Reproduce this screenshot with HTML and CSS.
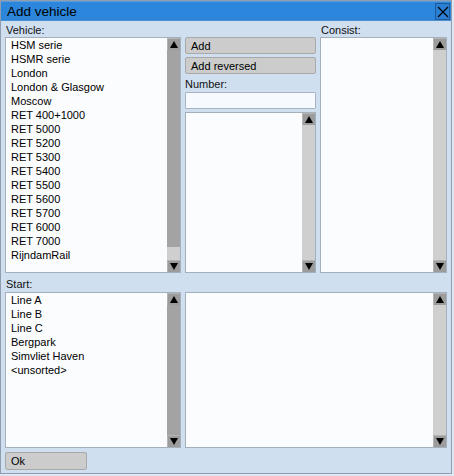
FILE: index.html
```html
<!DOCTYPE html>
<html>
<head>
<meta charset="utf-8">
<link rel="stylesheet" href="styles.css">
</head>
<body>
<div class="window">
  <div class="titlebar">
    <span class="title">Add vehicle</span>
    <span class="close"><svg width="12" height="12" viewBox="0 0 12 12"><path d="M1 1L11 11M11 1L1 11" stroke="#000" stroke-width="1.2"/></svg></span>
  </div>
  <div class="top">
    <div class="label">Vehicle:</div>
    <div class="label"></div>
    <div class="label">Consist:</div>
    <div class="list">
      <div class="items">
        <div>HSM serie</div><div>HSMR serie</div><div>London</div><div>London &amp; Glasgow</div><div>Moscow</div><div>RET 400+1000</div><div>RET 5000</div><div>RET 5200</div><div>RET 5300</div><div>RET 5400</div><div>RET 5500</div><div>RET 5600</div><div>RET 5700</div><div>RET 6000</div><div>RET 7000</div><div>RijndamRail</div>
      </div>
      <div class="sb">
        <div class="arrow"><span class="tri up"></span></div>
        <div class="track"><div class="thumb" style="height:197px"></div></div>
        <div class="arrow"><span class="tri down"></span></div>
      </div>
    </div>
    <div class="mid">
      <div class="btn">Add</div>
      <div class="btn">Add reversed</div>
      <div class="numlabel">Number:</div>
      <div class="input"></div>
      <div class="list grow">
        <div class="items"></div>
        <div class="sb">
          <div class="arrow"><span class="tri up"></span></div>
          <div class="track"></div>
          <div class="arrow"><span class="tri down"></span></div>
        </div>
      </div>
    </div>
    <div class="list">
      <div class="items"></div>
      <div class="sb">
        <div class="arrow"><span class="tri up"></span></div>
        <div class="track"></div>
        <div class="arrow"><span class="tri down"></span></div>
      </div>
    </div>
  </div>
  <div class="bottom">
    <div class="label slabel">Start:</div>
    <div class="label slabel"></div>
    <div class="list">
      <div class="items">
        <div>Line A</div><div>Line B</div><div>Line C</div><div>Bergpark</div><div>Simvliet Haven</div><div>&lt;unsorted&gt;</div>
      </div>
      <div class="sb">
        <div class="arrow"><span class="tri up"></span></div>
        <div class="track"><div class="thumb full"></div></div>
        <div class="arrow"><span class="tri down"></span></div>
      </div>
    </div>
    <div class="list">
      <div class="items"></div>
      <div class="sb">
        <div class="arrow"><span class="tri up"></span></div>
        <div class="track"></div>
        <div class="arrow"><span class="tri down"></span></div>
      </div>
    </div>
  </div>
  <div class="footer">
    <div class="btn ok">Ok</div>
  </div>
</div>
</body>
</html>
```
FILE: styles.css
```css
* { box-sizing: border-box; }
html, body { margin: 0; padding: 0; }
body {
  background: #dfe7f0;
  width: 454px;
  height: 476px;
  font-family: "Liberation Sans", Arial, sans-serif;
  font-size: 11px;
  color: #000;
}
.window {
  width: 452px;
  height: 474px;
  border: 1px solid #8e9eb0;
  background: #cfdff0;
  display: flex;
  flex-direction: column;
}
.titlebar {
  height: 20px;
  background: #2b86dc;
  display: flex;
  align-items: center;
  justify-content: space-between;
  padding: 1px 1px 0 6px;
  border-top: 1px solid #5a9ad8;
  border-bottom: 1px solid #4d8fd0;
}
.title { font-size: 13.5px; color: #000; }
.close {
  width: 15px;
  height: 17px;
  border: 1px solid #1d5a9c;
  background: #2a7fd2;
  display: flex;
  align-items: center;
  justify-content: center;
}
.top {
  display: grid;
  grid-template-columns: 176px 131px 127px;
  grid-template-rows: 16px 236px;
  column-gap: 4px;
  padding-left: 4px;
}
.label {
  display: flex;
  align-items: center;
  padding-left: 1px;
  padding-top: 1px;
  color: #111;
}
.list {
  display: flex;
  background: #fbfcfe;
  border: 1px solid #a5b0bd;
  min-height: 0;
}
.items {
  flex: 1;
  padding: 0 0 0 5px;
  line-height: 14px;
  overflow: hidden;
}
.sb {
  width: 13px;
  display: flex;
  flex-direction: column;
  background: #cbcbcb;
}
.arrow {
  height: 12px;
  background: #9c9c9c;
  border-top: 1px solid #b4b4b4;
  border-left: 1px solid #b4b4b4;
  display: flex;
  align-items: center;
  justify-content: center;
}
.tri { width: 0; height: 0; border-left: 4px solid transparent; border-right: 4px solid transparent; }
.tri.up { border-bottom: 7px solid #000; }
.tri.down { border-top: 7px solid #000; }
.track { flex: 1; background: #cfcfcf; }
.thumb { background: #a3a3a3; }
.thumb.full { height: 100%; }
.mid {
  display: flex;
  flex-direction: column;
}
.btn {
  height: 17px;
  background: #cccccc;
  border: 1px solid #a9a9a9;
  border-radius: 2px;
  padding-left: 5px;
  display: flex;
  align-items: center;
}
.btn + .btn { margin-top: 3px; }
.numlabel {
  height: 18px;
  display: flex;
  align-items: center;
  padding-top: 1px;
  color: #111;
}
.input {
  height: 17px;
  background: #f6f9fd;
  border: 1px solid #a9b4c0;
  border-radius: 1px;
}
.grow { flex: 1; margin-top: 3px; }
.bottom {
  display: grid;
  grid-template-columns: 176px 262px;
  grid-template-rows: 19px 156px;
  column-gap: 4px;
  padding-left: 4px;
}
.slabel { padding-top: 3px; }
.footer {
  padding: 4px 0 0 4px;
}
.ok { width: 82px; height: 18px; }
```
